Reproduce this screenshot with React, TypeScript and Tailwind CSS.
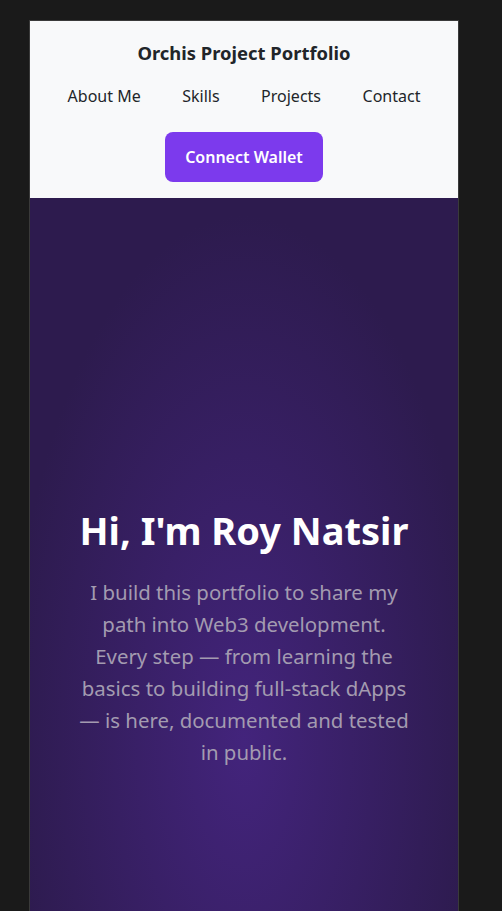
const navItems = ['About Me', 'Skills', 'Projects', 'Contact'];

const Header = () => {
  return (
    <header className="bg-[#f8f9fa] pt-[17px] pb-4 flex flex-col items-center">
      <h1 className="text-[18.4px] leading-[30px] font-bold text-[#212529]">Orchis Project Portfolio</h1>
      <nav className="mt-[16px] flex items-center gap-[41.5px] text-[16px] leading-6 text-[#212529]">
        {navItems.map((item) => (
          <a key={item} href="#" className="hover:text-violet-600">
            {item}
          </a>
        ))}
      </nav>
      <button className="mt-[24px] h-[50px] w-[158px] rounded-lg bg-[#7c3aed] text-white font-semibold text-[16px]">
        Connect Wallet
      </button>
    </header>
  );
};

const Hero = () => {
  return (
    <section className="min-h-[878px] flex flex-col items-center justify-center text-center px-6 bg-[radial-gradient(ellipse_55%_60%_at_50%_62%,#43247c_0%,#2d1b4e_100%)]">
      <h2 className="text-[38px] leading-[46px] font-bold text-white">Hi, I'm Roy Natsir</h2>
      <p className="mt-[23px] max-w-[336px] text-[20.4px] leading-[32px] text-[#a39bb0]">
        I build this portfolio to share my path into Web3 development. Every step — from learning the basics to building
        full-stack dApps — is here, documented and tested in public.
      </p>
    </section>
  );
};

export default function App() {
  return (
    <div className="min-h-screen bg-[#1a1a1a] pt-[20px] pl-[29px] font-['Noto_Sans',sans-serif]">
      <div className="w-[430px] border border-[#3a3a3a] border-b-0 overflow-hidden">
        <Header />
        <Hero />
      </div>
    </div>
  );
}
